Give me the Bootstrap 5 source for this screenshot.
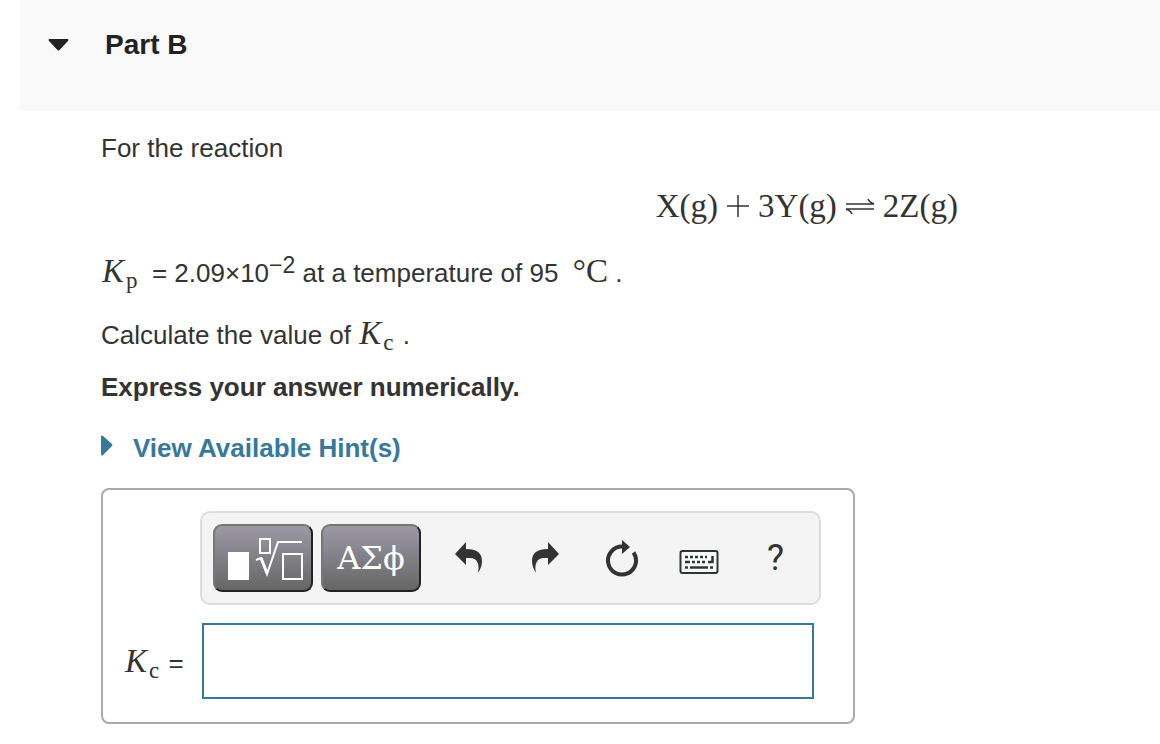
<!DOCTYPE html>
<html lang="en">
<head>
<meta charset="utf-8">
<meta name="viewport" content="width=device-width, initial-scale=1">
<title>Part B</title>
<link href="https://cdn.jsdelivr.net/npm/bootstrap@5.3.0/dist/css/bootstrap.min.css" rel="stylesheet">
<style>
  body { font-family: "Liberation Sans", Arial, sans-serif; font-size: 26px; line-height: 30px; color: #333; background: #fff; }
  .part-header { min-height: 111px; margin-left: 20px; padding: 28px; background: #f9f9f9; color: #222; }
  .part-toggle { gap: 36px; color: inherit; font-size: 28px; line-height: 34px; }
  .part-body { padding: 22px 20px 20px 101px; }
  .math { font-family: "Liberation Serif", "Times New Roman", serif; font-size: 33px; line-height: 20px; }
  .math i { padding: 0 2px 0 1px; }
  .math sub { font-size: 23px; bottom: -6px; padding-right: 2px; }
  .power { font-size: 23px; top: -9px; }
  .equation { gap: 8px; padding-right: 182px; margin: 31px 0 40px; }
  .statement { margin-bottom: 32px; }
  .statement sub { padding-right: 0; }
  .question { margin-bottom: 22px; }
  .hint-link { gap: 20px; color: #36799b; margin: 31px 0 25px; }
  .answer-box { max-width: 754px; border: 2px solid #aaa; border-radius: 8px; padding: 21px 39px 23px 21px; }
  .answer-grid { display: grid; grid-template-columns: 78px minmax(0, 1fr); row-gap: 18px; }
  .toolbar { grid-column: 2; margin: 0 -7px 0 -2px; height: 94px; border: 2px solid #ddd; border-radius: 10px; background: #f4f4f4; padding-left: 11px; }
  .key { width: 100px; height: 68px; border: 2px solid; border-color: #777 #222 #222 #777; border-radius: 9px; background: linear-gradient(#9c99a5, #666); color: #fff; font-family: "DejaVu Serif", serif; font-size: 32px; }
  .tool { flex: 0 1 77px; height: 68px; border: 0; background: none; color: #333; font-family: Roboto, sans-serif; font-size: 36px; }
  .answer-input { height: 76px; border: 2px solid #36799b; border-radius: 0; font-size: 26px; }
</style>
</head>
<body>
<header class="part-header">
  <button type="button" class="part-toggle btn p-0 border-0 d-flex align-items-center fw-bold">
    <svg width="21" height="13" viewBox="0 0 21 13" fill="currentColor" aria-hidden="true"><path d="M1 0h19q1 1 0 2L11.500 11q-1 1-2 0L1 2Q0 1 1 0z"/></svg>
    <span>Part B</span>
  </button>
</header>
<main class="part-body">
  <p class="mb-0">For the reaction</p>
  <div class="equation math d-flex justify-content-end align-items-center">
    <span>X(g)</span>
    <svg width="24" height="24" viewBox="0 0 24 24" stroke="currentColor" stroke-width="1.500" role="img" aria-label="plus"><path d="M1 12h22M12 1v22"/></svg>
    <span>3Y(g)</span>
    <svg width="30" height="18" viewBox="0 0 30 18" fill="none" stroke="currentColor" stroke-width="1.500" role="img" aria-label="is in equilibrium with"><path d="M1 7h28q-5-2-6-5M29 12H1q5 2 6 5"/></svg>
    <span>2Z(g)</span>
  </div>
  <p class="statement"><span class="math"><i>K</i><sub>p</sub></span> &nbsp;= 2.09×10<sup class="power">−2</sup> at a temperature of 95 &nbsp;<span class="math">°C</span> .</p>
  <p class="question">Calculate the value of <span class="math"><i>K</i><sub>c</sub></span> .</p>
  <p class="fw-bold mb-0">Express your answer numerically.</p>
  <a href="#hints" class="hint-link d-flex align-items-center fw-bold text-decoration-none">
    <svg class="mb-1" width="12" height="22" viewBox="0 0 12 22" fill="currentColor" aria-hidden="true"><path d="M0 1q1-1 2 0l9 8q1 1 0 2l-9 9q-1 1-2 0z"/></svg>
    <span>View Available Hint(s)</span>
  </a>
  <section class="answer-box">
    <div class="answer-grid align-items-center">
      <div class="toolbar d-flex align-items-center" role="toolbar" aria-label="Equation tools">
        <button type="button" class="key p-0 me-2 flex-shrink-0 d-flex align-items-center justify-content-center" aria-label="Templates">
          <svg width="80" height="48" viewBox="0 0 80 48" fill="none" stroke="#fff" stroke-width="1.500"><path fill="#fff" stroke="none" d="M5 18h21v28H5z"/><path stroke-width="2" d="M37 5h10v14H37zM60 20h19v25H60z"/><path stroke-width="2" d="M33 26l5-2 6 16L55 8h24"/><path stroke-width="3" d="M38 24l6 15"/></svg>
        </button>
        <button type="button" class="key p-0 flex-shrink-0 me-2" aria-label="Greek letters">ΑΣϕ</button>
        <button type="button" class="tool p-0" aria-label="Undo"><svg class="d-block mx-auto" width="28" height="32" viewBox="0 0 28 32" fill="currentColor"><path d="M1 12L12 0v7c11 0 16 4 16 12q0 6-4 12c2-9-1-15-8-15h-4v7z"/></svg></button>
        <button type="button" class="tool p-0" aria-label="Redo"><svg class="d-block mx-auto" width="28" height="32" viewBox="0 0 28 32" fill="currentColor"><path d="M28 12L17 0v7C6 7 1 11 1 19q0 6 4 12C3 22 6 16 13 16h4v7z"/></svg></button>
        <button type="button" class="tool p-0" aria-label="Reset"><svg class="d-block mx-auto" width="34" height="38" viewBox="0 0 34 38"><path d="M17 7.500A14 14 0 1 0 28.500 13.500" fill="none" stroke="currentColor" stroke-width="4"/><path d="M17 1l8 7-8 7z" fill="currentColor"/></svg></button>
        <button type="button" class="tool p-0" aria-label="Keyboard shortcuts"><svg class="d-block mx-auto mt-2" width="40" height="26" viewBox="0 0 40 26" fill="none" stroke="currentColor" stroke-width="2"><rect x="1.500" y="2" width="37" height="22" rx="2" fill="#f8fffa"/><path stroke-width="2.500" stroke-dasharray="3 2" d="M6 8h22"/><path stroke-width="2.500" d="M6 13h5m2 0h3m2 0h3m2 0h3M29 13h4.500V7M6 18.500h3m2 0h18m2 0h3"/></svg></button>
        <button type="button" class="tool p-0" aria-label="Help">?</button>
      </div>
      <label for="answer" class="text-nowrap pt-1"><span class="math"><i>K</i><sub>c</sub></span> =</label>
      <input id="answer" type="text" class="answer-input form-control" autocomplete="off">
    </div>
  </section>
</main>
<script src="https://cdn.jsdelivr.net/npm/bootstrap@5.3.0/dist/js/bootstrap.bundle.min.js"></script>
</body>
</html>
